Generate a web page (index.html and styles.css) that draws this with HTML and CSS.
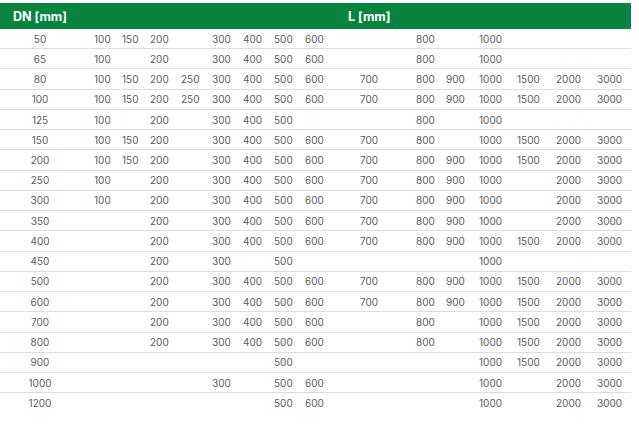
FILE: index.html
```html
<!DOCTYPE html>
<html>
<head>
<meta charset="utf-8">
<link rel="stylesheet" href="styles.css">
</head>
<body>
<div class="table">
  <div class="head">
    <div class="h-dn">DN [mm]</div>
    <div class="h-l">L [mm]</div>
  </div>
  <div class="row"><span class="dn">50</span><span>100</span><span>150</span><span>200</span><span></span><span>300</span><span>400</span><span>500</span><span>600</span><span></span><span>800</span><span></span><span>1000</span><span></span><span></span><span></span></div>
  <div class="row"><span class="dn">65</span><span>100</span><span></span><span>200</span><span></span><span>300</span><span>400</span><span>500</span><span>600</span><span></span><span>800</span><span></span><span>1000</span><span></span><span></span><span></span></div>
  <div class="row"><span class="dn">80</span><span>100</span><span>150</span><span>200</span><span>250</span><span>300</span><span>400</span><span>500</span><span>600</span><span>700</span><span>800</span><span>900</span><span>1000</span><span>1500</span><span>2000</span><span>3000</span></div>
  <div class="row"><span class="dn">100</span><span>100</span><span>150</span><span>200</span><span>250</span><span>300</span><span>400</span><span>500</span><span>600</span><span>700</span><span>800</span><span>900</span><span>1000</span><span>1500</span><span>2000</span><span>3000</span></div>
  <div class="row"><span class="dn">125</span><span>100</span><span></span><span>200</span><span></span><span>300</span><span>400</span><span>500</span><span></span><span></span><span>800</span><span></span><span>1000</span><span></span><span></span><span></span></div>
  <div class="row"><span class="dn">150</span><span>100</span><span>150</span><span>200</span><span></span><span>300</span><span>400</span><span>500</span><span>600</span><span>700</span><span>800</span><span></span><span>1000</span><span>1500</span><span>2000</span><span>3000</span></div>
  <div class="row"><span class="dn">200</span><span>100</span><span>150</span><span>200</span><span></span><span>300</span><span>400</span><span>500</span><span>600</span><span>700</span><span>800</span><span>900</span><span>1000</span><span>1500</span><span>2000</span><span>3000</span></div>
  <div class="row"><span class="dn">250</span><span>100</span><span></span><span>200</span><span></span><span>300</span><span>400</span><span>500</span><span>600</span><span>700</span><span>800</span><span>900</span><span>1000</span><span></span><span>2000</span><span>3000</span></div>
  <div class="row"><span class="dn">300</span><span>100</span><span></span><span>200</span><span></span><span>300</span><span>400</span><span>500</span><span>600</span><span>700</span><span>800</span><span>900</span><span>1000</span><span></span><span>2000</span><span>3000</span></div>
  <div class="row"><span class="dn">350</span><span></span><span></span><span>200</span><span></span><span>300</span><span>400</span><span>500</span><span>600</span><span>700</span><span>800</span><span>900</span><span>1000</span><span></span><span>2000</span><span>3000</span></div>
  <div class="row"><span class="dn">400</span><span></span><span></span><span>200</span><span></span><span>300</span><span>400</span><span>500</span><span>600</span><span>700</span><span>800</span><span>900</span><span>1000</span><span>1500</span><span>2000</span><span>3000</span></div>
  <div class="row"><span class="dn">450</span><span></span><span></span><span>200</span><span></span><span>300</span><span></span><span>500</span><span></span><span></span><span></span><span></span><span>1000</span><span></span><span></span><span></span></div>
  <div class="row"><span class="dn">500</span><span></span><span></span><span>200</span><span></span><span>300</span><span>400</span><span>500</span><span>600</span><span>700</span><span>800</span><span>900</span><span>1000</span><span>1500</span><span>2000</span><span>3000</span></div>
  <div class="row"><span class="dn">600</span><span></span><span></span><span>200</span><span></span><span>300</span><span>400</span><span>500</span><span>600</span><span>700</span><span>800</span><span>900</span><span>1000</span><span>1500</span><span>2000</span><span>3000</span></div>
  <div class="row"><span class="dn">700</span><span></span><span></span><span>200</span><span></span><span>300</span><span>400</span><span>500</span><span>600</span><span></span><span>800</span><span></span><span>1000</span><span>1500</span><span>2000</span><span>3000</span></div>
  <div class="row"><span class="dn">800</span><span></span><span></span><span>200</span><span></span><span>300</span><span>400</span><span>500</span><span>600</span><span></span><span>800</span><span></span><span>1000</span><span>1500</span><span>2000</span><span>3000</span></div>
  <div class="row"><span class="dn">900</span><span></span><span></span><span></span><span></span><span></span><span></span><span>500</span><span></span><span></span><span></span><span></span><span>1000</span><span>1500</span><span>2000</span><span>3000</span></div>
  <div class="row"><span class="dn">1000</span><span></span><span></span><span></span><span></span><span>300</span><span></span><span>500</span><span>600</span><span></span><span></span><span></span><span>1000</span><span></span><span>2000</span><span>3000</span></div>
  <div class="row last"><span class="dn">1200</span><span></span><span></span><span></span><span></span><span></span><span></span><span>500</span><span>600</span><span></span><span></span><span></span><span>1000</span><span></span><span>2000</span><span>3000</span></div>
</div>
</body>
</html>
```

FILE: styles.css
```css
html, body {
  margin: 0;
  padding: 0;
  background: #ffffff;
}

body {
  font-family: Inter, "Liberation Sans", sans-serif;
}

.table {
  width: 631px;
  margin-top: 3px;
}

.head {
  display: grid;
  grid-template-columns: 94px 1fr;
  height: 26px;
  background: #07843f;
  color: #ffffff;
  font-weight: 700;
  font-size: 12.5px;
  align-items: center;
}

.h-dn {
  padding-left: 13px;
}

.h-l {
  padding-left: 254px;
}

.row {
  display: grid;
  grid-template-columns: 94px 28px 28px 31px 31px 31px 31px 31px 55px 56px 30px 33px 38px 39px 41px 34px;
  height: 20.24px;
  box-sizing: border-box;
  border-bottom: 1px solid #dddddd;
  align-items: center;
  font-size: 10px;
  color: #5b5b5b;
}

.row.last {
  border-bottom: none;
}

.row span {
  white-space: nowrap;
}

.row .dn {
  text-align: center;
  padding-right: 14px;
}
```
